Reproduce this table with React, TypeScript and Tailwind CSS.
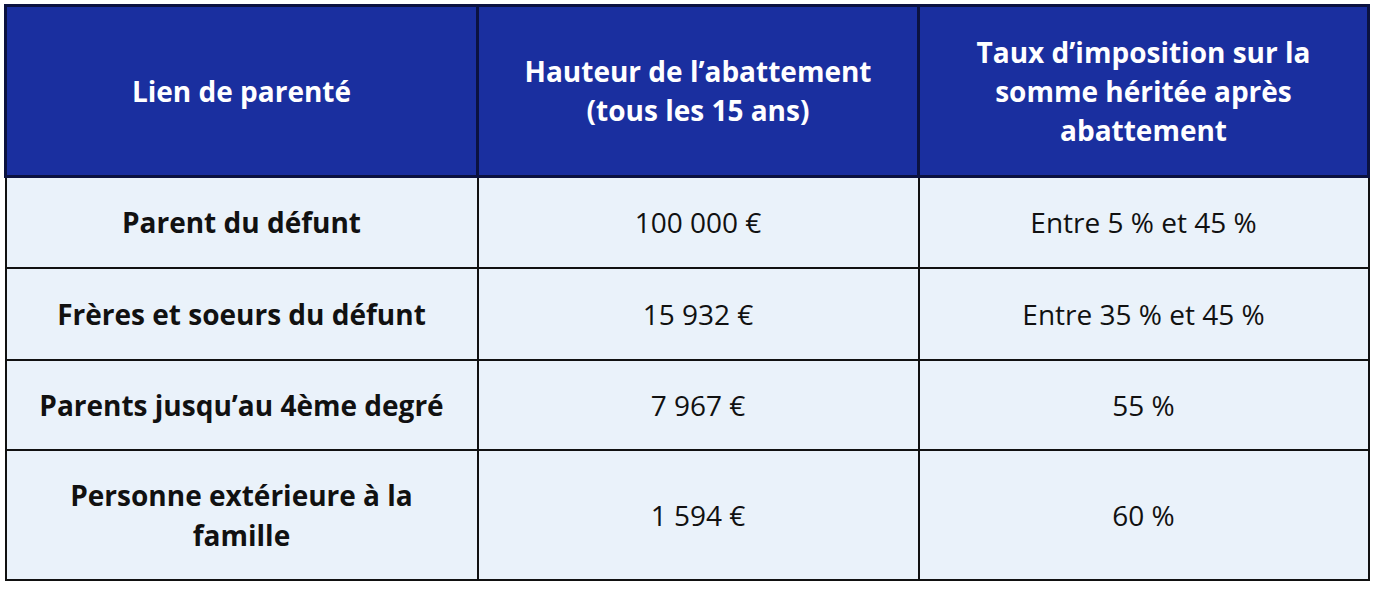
import React from "react";

const rows = [
  { a: "Parent du défunt", b: "100 000 €", c: "Entre 5 % et 45 %", h: "h-[91px]" },
  { a: "Frères et soeurs du défunt", b: "15 932 €", c: "Entre 35 % et 45 %", h: "h-[92px]" },
  { a: "Parents jusqu’au 4ème degré", b: "7 967 €", c: "55 %", h: "h-[90px]" },
  { a: "Personne extérieure à la famille", b: "1 594 €", c: "60 %", h: "h-[130px]" },
];

export default function App() {
  return (
    <div className="bg-white w-[1376px] h-[589px] pl-[4px] pt-[4px]" style={{ fontFamily: '"Open Sans", "Noto Sans", sans-serif' }}>
      <table className="table-fixed border-collapse w-[1363px]">
        <colgroup>
          <col className="w-[472px]" />
          <col className="w-[441px]" />
          <col className="w-[450px]" />
        </colgroup>
        <thead>
          <tr className="h-[171px]">
            <th className="border-[3px] border-[#0b1240] bg-[#1a2f9f] text-white font-bold text-[28px] leading-[39px] text-center align-middle px-6">
              Lien de parenté
            </th>
            <th className="border-[3px] border-[#0b1240] bg-[#1a2f9f] text-white font-bold text-[28px] leading-[39px] text-center align-middle px-4">
              Hauteur de l’abattement
              <br />
              (tous les 15 ans)
            </th>
            <th className="border-[3px] border-[#0b1240] bg-[#1a2f9f] text-white font-bold text-[28px] leading-[39px] text-center align-middle px-[40px]">
              Taux d’imposition sur la somme héritée après abattement
            </th>
          </tr>
        </thead>
        <tbody>
          {rows.map((r) => (
            <tr key={r.a} className={r.h}>
              <td className="border-2 border-[#111] bg-[#eaf2fa] text-[#111] font-bold text-[28px] leading-[40px] text-center align-middle px-[28px]">
                {r.a}
              </td>
              <td className="border-2 border-[#111] bg-[#eaf2fa] text-[#111] text-[28px] leading-[40px] text-center align-middle">
                {r.b}
              </td>
              <td className="border-2 border-[#111] bg-[#eaf2fa] text-[#111] text-[28px] leading-[40px] text-center align-middle">
                {r.c}
              </td>
            </tr>
          ))}
        </tbody>
      </table>
    </div>
  );
}
